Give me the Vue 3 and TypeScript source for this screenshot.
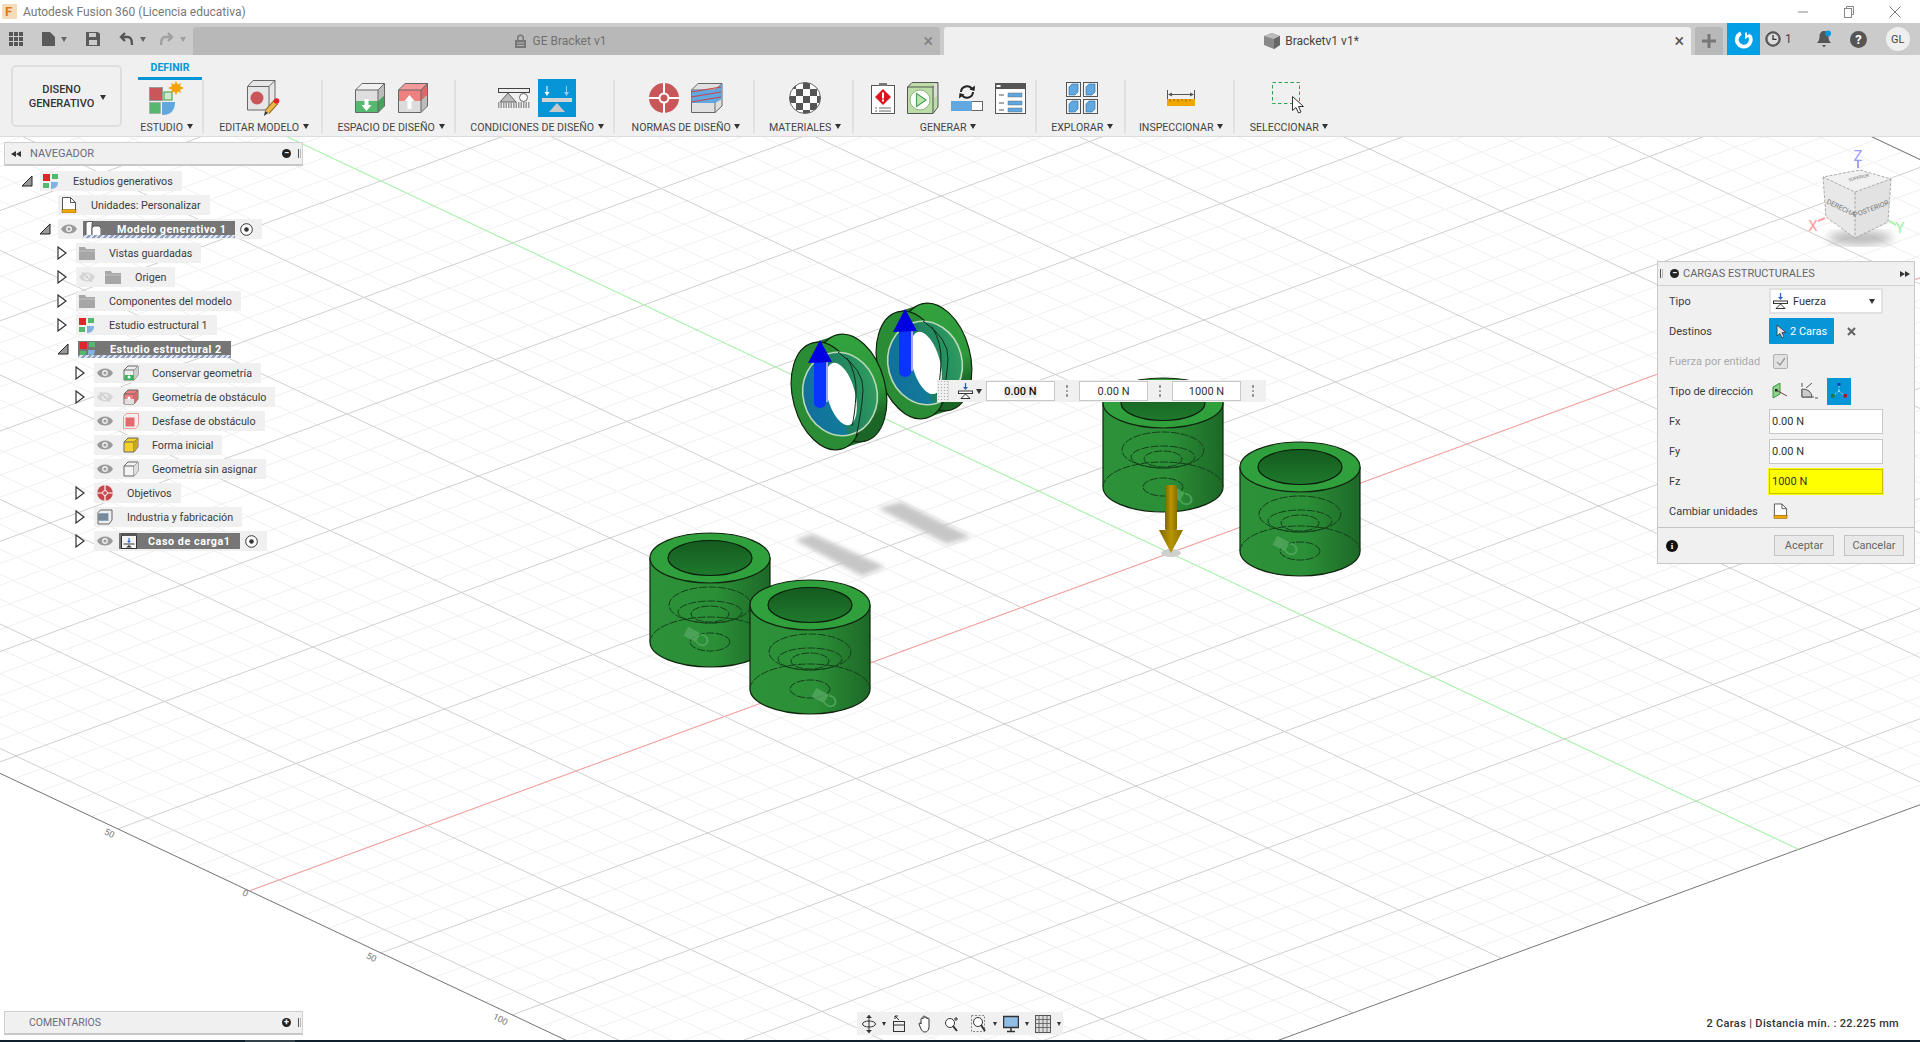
<template>
  <div class="app">
    <div class="titlebar">
      <svg class="titlebar__logo" width="15" height="15" viewBox="0 0 15 15">
        <rect width="15" height="15" fill="#f7dcb9" />
        <text x="3" y="12" font-size="13" font-weight="700" font-family="Roboto, sans-serif" fill="#d97a1e">F</text>
      </svg>
      <span class="titlebar__text">Autodesk Fusion 360 (Licencia educativa)</span>
      <div class="winctl">
        <span class="winctl__btn" v-for="w in winIcons" :key="w" v-html="w" />
      </div>
    </div>

    <div class="tabbar">
      <div class="quick">
        <svg width="14" height="14" viewBox="0 0 14 14" fill="#555">
          <template v-for="y in [0, 5, 10]" :key="y">
            <rect v-for="x in [0, 5, 10]" :key="x" :x="x" :y="y" width="4" height="4" />
          </template>
        </svg>
        <span class="quick__btn">
          <svg width="13" height="14" viewBox="0 0 13 14" fill="#5a5a5a"><path d="M0 0h8l5 5v9H0z" /></svg>
          <i class="caret" />
        </span>
        <svg width="14" height="14" viewBox="0 0 14 14" fill="#5a5a5a"><path d="M0 0h12l2 2v12H0zM3 1v4h7V1zM3 8v5h8V8z" fill-rule="evenodd" /></svg>
        <span class="quick__btn">
          <svg width="15" height="14" viewBox="0 0 15 14" fill="none" stroke="#555" stroke-width="2.4"><path d="M6 1 2 5l4 4M2 5h7c3 0 4 3 4 8" /></svg>
          <i class="caret" />
        </span>
        <span class="quick__btn quick__btn--redo">
          <svg width="15" height="14" viewBox="0 0 15 14" fill="none" stroke="#a0a0a0" stroke-width="2.4"><path d="m9 1 4 4-4 4M13 5H6C3 5 2 8 2 13" /></svg>
          <i class="caret caret--dim" />
        </span>
      </div>
      <div class="doc-tab">
        <span />
        <span class="doc-tab__name doc-tab__name--dim">
          <svg width="11" height="14" viewBox="0 0 11 14" fill="#777"><path d="M2 6V4a3.5 3.5 0 0 1 7 0v2h2v8H0V6zm1.500 0h4V4a2 2 0 0 0-4 0zM2 8.500h7v1H2zm0 2.500h7v1H2z" fill-rule="evenodd" /></svg>
          GE Bracket v1
        </span>
        <span class="doc-tab__close doc-tab__close--dim">×</span>
      </div>
      <div class="doc-tab doc-tab--active">
        <span />
        <span class="doc-tab__name">
          <svg width="16" height="16" viewBox="0 0 16 16"><path d="m8 0 8 3v9l-6 4-10-4V3z" fill="#888" /><path d="m0 3 10 3 6-3-8-3z" fill="#bbb" /><path d="m10 6 6-3v9l-6 4z" fill="#666" /></svg>
          Bracketv1 v1*
        </span>
        <span class="doc-tab__close">×</span>
      </div>
      <div class="tabbar__plus">
        <svg width="14" height="14" viewBox="0 0 14 14" fill="#777"><path d="M5.500 0h3v5.500H14v3H8.500V14h-3V8.500H0v-3h5.500z" /></svg>
      </div>
      <div class="tabbar__sync">
        <svg width="19" height="19" viewBox="0 0 19 19" fill="none" stroke="#fff" stroke-width="3.800">
          <path d="M7 3.200a7 7 0 1 0 8.500 2.300" />
          <path d="M12 2.500v5l4-3" stroke-width="1.800" />
        </svg>
      </div>
      <div class="tabbar__tools">
        <span class="tabbar__job">
          <svg width="16" height="16" viewBox="0 0 16 16">
            <circle cx="8" cy="8" r="7.200" fill="#666" stroke="#444" />
            <circle cx="8" cy="8" r="5.400" fill="#ddd" />
            <path d="M8 4v4.400h3.500" fill="none" stroke="#333" stroke-width="1.300" />
          </svg>
          1
        </span>
        <svg class="tabbar__bell" width="15" height="18" viewBox="0 0 15 18">
          <path d="M7 1c3 0 4.500 2.500 4.500 6 0 3 1 4.500 2.500 6H0c1.500-1.500 2.500-3 2.500-6C2.500 3.500 4 1 7 1z" fill="#555" />
          <path d="M5 15h4l-2 2.500z" fill="#555" />
          <circle cx="11" cy="3.500" r="3" fill="#0696d7" />
        </svg>
        <svg class="tabbar__help" width="17" height="17" viewBox="0 0 17 17">
          <circle cx="8.500" cy="8.500" r="8.500" fill="#555" />
          <text x="8.500" y="13" font-size="13" font-weight="700" text-anchor="middle" font-family="Roboto, sans-serif" fill="#fff">?</text>
        </svg>
        <span class="tabbar__avatar">GL</span>
      </div>
    </div>

    <div class="ribbon">
      <button class="mode-btn">
        <span>DISENO<br />GENERATIVO</span>
        <i class="caret caret--dark" />
      </button>
      <div class="ribbon__main">
        <div class="ribbon__tabs"><span class="ribbon__tab">DEFINIR</span></div>
        <div class="ribbon__tools">
          <div
            v-for="group in toolGroups"
            :key="group.label"
            class="tool"
            :style="{ width: group.width + 'px', paddingLeft: group.pad + 'px', borderRightWidth: group.last ? 0 : undefined }"
          >
            <div class="tool__icons" :style="{ gap: group.gap + 'px' }">
              <svg
                v-for="icon in group.icons"
                :key="icon.name"
                :width="icon.w"
                :height="icon.h"
                :viewBox="`0 0 ${icon.w} ${icon.h}`"
                v-html="toolIcons[icon.name]"
              />
            </div>
            <div class="tool__label">{{ group.label }} <i class="caret caret--dark" /></div>
          </div>
        </div>
      </div>
    </div>

    <div class="viewport">
      <svg class="scene" width="1920" height="903" viewBox="0 137 1920 903">
        <defs>
          <linearGradient id="cylBody" x1="0" x2="1" y1="0" y2="0">
            <stop offset="0" stop-color="#2c9138" />
            <stop offset="0.55" stop-color="#2b8f37" />
            <stop offset="1" stop-color="#1d6827" />
          </linearGradient>
          <linearGradient id="cylHole" x1="0" x2="0" y1="0" y2="1">
            <stop offset="0" stop-color="#145a1f" />
            <stop offset="1" stop-color="#1f7a2c" />
          </linearGradient>
          <linearGradient id="ringBack" x1="0" x2="0" y1="0" y2="1">
            <stop offset="0" stop-color="#32a33e" />
            <stop offset="0.55" stop-color="#2e983a" />
            <stop offset="0.8" stop-color="#1b6626" />
            <stop offset="1" stop-color="#1b6626" />
          </linearGradient>
          <linearGradient id="ringInner" x1="0" x2="1" y1="0" y2="0">
            <stop offset="0" stop-color="#12709c" />
            <stop offset="0.42" stop-color="#127a9a" />
            <stop offset="0.5" stop-color="#1e7f60" />
            <stop offset="1" stop-color="#2f9c5e" />
          </linearGradient>
          <linearGradient id="gold" x1="0" x2="1" y1="0" y2="0">
            <stop offset="0" stop-color="#7e6400" />
            <stop offset="0.5" stop-color="#b89600" />
            <stop offset="1" stop-color="#8a6e00" />
          </linearGradient>
          <filter id="blur2"><feGaussianBlur stdDeviation="2.400" /></filter>
          <filter id="blur5"><feGaussianBlur stdDeviation="5" /></filter>
        </defs>

        <line
          v-for="(l, i) in gridLines"
          :key="i"
          :x1="l.x1"
          :y1="l.y1"
          :x2="l.x2"
          :y2="l.y2"
          :stroke="l.color"
          stroke-width="1"
        />
        <text
          v-for="t in gridLabels"
          :key="t.x"
          class="scene__tick"
          :transform="`translate(${t.x} ${t.y}) rotate(27)`"
          text-anchor="middle"
        >{{ t.text }}</text>

        <polygon points="878,508 901,502 971,537 947,544" fill="#c6c6c6" filter="url(#blur2)" />
        <polygon points="795,540 812,534 885,567 862,576" fill="#c6c6c6" filter="url(#blur2)" />

        <g v-for="c in cylinders" :key="c.x" :transform="`translate(${c.x} ${c.y})`">
          <path d="M-60 0V84A60 25 0 0 0 60 84V0z" fill="url(#cylBody)" stroke="#10240f" stroke-width="1.200" />
          <g fill="none" stroke="#14401a" stroke-width="1" stroke-dasharray="8 1.500">
            <ellipse cy="47" rx="41" ry="18" />
            <ellipse cy="54" rx="32" ry="11" />
            <ellipse cy="56" rx="19" ry="8" />
            <path d="M-60 84A60 25 0 0 1 60 84" />
            <ellipse cy="84" rx="20" ry="9" />
          </g>
          <g :transform="`translate(${c.mark} ${c.mark < 0 ? 77 : 91}) rotate(28)`" fill="#55a860" opacity="0.8">
            <rect x="-8" y="-5" width="14" height="10" />
            <path d="M7-4a6 5 0 1 1-1 8" fill="none" stroke="#55a860" stroke-width="2" />
          </g>
          <ellipse rx="60" ry="25" fill="#30a03c" stroke="#10240f" stroke-width="1.200" />
          <ellipse rx="42" ry="17.500" fill="url(#cylHole)" stroke="#0c1c0c" stroke-width="1.200" />
        </g>

        <g v-for="r in rings" :key="r" :transform="`translate(${r} ${r * -0.365})`">
          <polygon points="813,343 837,335 865,441 841,449" fill="#1d6c27" />
          <ellipse cx="851" cy="388" rx="34" ry="55" transform="rotate(-15 851 388)" fill="url(#ringBack)" stroke="#10240f" stroke-width="1.200" />
          <ellipse cx="827" cy="396" rx="34" ry="55" transform="rotate(-15 827 396)" fill="#2a8c34" stroke="#10240f" stroke-width="1.200" />
          <ellipse cx="840" cy="394" rx="37" ry="42" transform="rotate(-15 840 394)" fill="url(#ringInner)" stroke="#b9d8ba" stroke-width="1.600" />
          <ellipse cx="841" cy="394" rx="14" ry="32" transform="rotate(-15 841 394)" fill="#fff" />
          <path d="M838 352q26 18 25 38t-7 47" fill="none" stroke="#0e2a1a" stroke-width="1" />
          <path d="M847 358q10 16 9 36t-4 32" fill="none" stroke="#0e2a1a" stroke-width="1" />
          <rect x="825" y="362" width="3" height="40" fill="#a6a6ff" />
          <path d="M814 362h12v41a6 5 0 0 1-12 0z" fill="#0a34ff" />
          <polygon points="820,340 808,363 832,362" fill="#0000e0" />
        </g>

        <ellipse cx="1171" cy="553" rx="10" ry="4" fill="#cfcfcf" />
        <rect x="1165" y="485" width="12" height="46" rx="3" fill="url(#gold)" />
        <polygon points="1159,530 1183,530 1171,553" fill="url(#gold)" />

        <ellipse cx="1860" cy="238" rx="32" ry="7" fill="#8a8a8a" opacity="0.6" filter="url(#blur5)" />
        <polygon points="1860,170 1891,179 1855,192 1823,177" fill="#f1f1f1" />
        <polygon points="1823,177 1855,192 1855,238 1826,217" fill="#e8e8e8" />
        <polygon points="1855,192 1891,179 1888,222 1855,238" fill="#e2e2e2" />
        <g fill="none" stroke="#999" stroke-width="0.800" stroke-dasharray="3 1.500">
          <path d="M1860 170l31 9-36 13-32-15z" />
          <path d="M1823 177l3 40 29 21 33-16 3-43M1855 192v46" />
        </g>
        <text class="scene__cube" transform="translate(1840 210) rotate(26)" text-anchor="middle">DERECHA</text>
        <text class="scene__cube" transform="translate(1872 211) rotate(-21)" text-anchor="middle">POSTERIOR</text>
        <text class="scene__cube scene__cube--top" transform="translate(1859 179) rotate(-14)" text-anchor="middle">SUPERIOR</text>
        <path d="M1858 168v-7" stroke="#a3a3ff" stroke-width="2" />
        <path d="M1825 218l-7 3" stroke="#ff9e9e" stroke-width="2" />
        <path d="M1889 221l7 4" stroke="#a6f5a6" stroke-width="2" />
        <text class="scene__axis" x="1858" y="161" fill="#9a9aff" text-anchor="middle">Z</text>
        <text class="scene__axis" x="1813" y="231" fill="#ff9c9c" text-anchor="middle">X</text>
        <text class="scene__axis" x="1900" y="233" fill="#a6f0a6" text-anchor="middle">Y</text>
      </svg>

      <div class="side-panel side-panel--nav">
        <span class="rewind"><i /><i /></span>
        <span class="side-panel__title">NAVEGADOR</span>
        <span class="round-btn">−</span>
        <span class="grip" />
      </div>

      <div class="tree">
        <div
          v-for="row in tree"
          :key="row.label"
          class="tree__row"
          :style="{ paddingLeft: 21 + row.depth * 18 + 'px' }"
        >
          <span class="tree__arrow">
            <svg v-if="row.arrow === 'open'" width="12" height="12" viewBox="0 0 12 12">
              <polygon points="1,11 11,1 11,11" fill="#999" stroke="#222" />
            </svg>
            <svg v-else-if="row.arrow === 'closed'" width="10" height="14" viewBox="0 0 10 14">
              <polygon points="1,1 9,7 1,13" fill="#fff" stroke="#333" stroke-width="1.200" />
            </svg>
          </span>
          <div class="node" :class="{ 'node--bare': row.active && !row.eye }">
            <svg v-if="row.eye" class="node__eye" width="16" height="10" viewBox="0 0 16 10" :opacity="row.eye === 'off' ? 0.3 : 1">
              <path d="M0 5c3-6 13-6 16 0-3 6-13 6-16 0z" fill="#9a9a9a" />
              <circle cx="8" cy="5" r="3" fill="#f0f0f0" />
              <circle cx="8" cy="5" r="1.600" fill="#9a9a9a" />
              <path v-if="row.eye === 'off'" d="M3 0l10 10" stroke="#888" stroke-width="1.500" />
            </svg>
            <div class="node__body" :class="{ 'node__body--active': row.active, 'node__body--hatched': row.hatched }">
              <svg class="node__icon" width="16" height="16" viewBox="0 0 16 16" v-html="treeIcons[row.icon]" />
              <span class="node__label" :style="{ marginLeft: (row.gap ?? 14) + 'px' }">{{ row.label }}</span>
            </div>
            <svg v-if="row.radio" class="node__radio" width="13" height="13" viewBox="0 0 13 13">
              <circle cx="6.500" cy="6.500" r="5.800" fill="#fff" stroke="#333" />
              <circle cx="6.500" cy="6.500" r="2.300" fill="#333" />
            </svg>
          </div>
        </div>
      </div>

      <div class="side-panel side-panel--comments">
        <span class="side-panel__title">COMENTARIOS</span>
        <span class="round-btn">+</span>
        <span class="grip" />
      </div>

      <div class="float-bar">
        <span class="float-bar__grip" />
        <svg width="15" height="16" viewBox="0 0 15 16" v-html="forceIcon" />
        <i class="caret caret--dark" />
        <template v-for="(v, i) in ['0.00 N', '0.00 N', '1000 N']" :key="i">
          <span class="float-bar__input">
            <span :class="{ 'float-bar__sel': i === 0 }">{{ v }}</span>
          </span>
          <span class="float-bar__dots"><i /><i /><i /></span>
        </template>
      </div>

      <div class="panel">
        <div class="panel__head">
          <span class="grip" />
          <span class="round-btn">−</span>
          <span class="panel__title">CARGAS ESTRUCTURALES</span>
          <span class="rewind rewind--fwd"><i /><i /></span>
        </div>
        <div class="panel__row">
          <label>Tipo</label>
          <div class="select">
            <svg width="15" height="16" viewBox="0 0 15 16" v-html="forceIcon" />
            <span>Fuerza</span>
            <i class="caret caret--dark" />
          </div>
        </div>
        <div class="panel__row">
          <label>Destinos</label>
          <div class="target">
            <svg width="11" height="15" viewBox="0 0 11 15"><path d="M1 1v11l3-2.500 2 4.500 2-1-2-4.500h4z" fill="#e4e4e4" stroke="#333" stroke-width=".8" /></svg>
            2 Caras
          </div>
          <svg class="panel__clear" width="9" height="9" viewBox="0 0 9 9"><path d="m1 1 7 7M8 1 1 8" stroke="#666" stroke-width="2.200" /></svg>
        </div>
        <div class="panel__row">
          <label class="is-disabled">Fuerza por entidad</label>
          <span class="check">
            <svg width="10" height="9" viewBox="0 0 10 9"><path d="m1 5 3 3 5-7" fill="none" stroke="#999" stroke-width="1.300" /></svg>
          </span>
        </div>
        <div class="panel__row">
          <label>Tipo de dirección</label>
          <div class="dirs">
            <svg width="16" height="16" viewBox="0 0 16 16"><path d="M1 4 8 0v11l-7 4z" fill="#8fd08f" stroke="#3c9a3c" /><path d="m4 7 11 6" stroke="#744" /><rect x="3" y="6" width="2.500" height="2.500" fill="#222" /></svg>
            <svg width="17" height="16" viewBox="0 0 17 16" fill="none" stroke="#555"><path d="M1 0v4M1 6v8h12M5 5l6-5" /><path d="M1 6q9 0 10 8H1z" fill="#ccc" /><path d="M14 15h3" /></svg>
            <span class="dirs__on">
              <svg width="18" height="16" viewBox="0 0 18 16"><path d="M9 8V1M9 8 3 13M9 8l6 5" stroke="#b8e0f0" stroke-dasharray="2 1.500" fill="none" /><rect x="1" y="11" width="3.500" height="3.500" fill="#1c7a28" /><rect x="13.500" y="11" width="3.500" height="3.500" fill="#a32020" /><rect x="7.500" y="0" width="3" height="3" fill="#1b3fbb" /></svg>
            </span>
          </div>
        </div>
        <div v-for="f in forces" :key="f.label" class="panel__row">
          <label>{{ f.label }}</label>
          <div class="input" :class="{ 'input--hi': f.hi }">{{ f.value }}</div>
        </div>
        <div class="panel__row">
          <label>Cambiar unidades</label>
          <svg class="panel__units" width="15" height="16" viewBox="0 0 16 16" v-html="treeIcons.units" />
        </div>
        <div class="panel__foot">
          <span class="info">i</span>
          <button class="btn">Aceptar</button>
          <button class="btn">Cancelar</button>
        </div>
      </div>

      <div class="nav-bar">
        <template v-for="b in navBar" :key="b.name">
          <svg :class="{ 'nav-bar__solo': !b.caret }" :width="b.w" height="18" :viewBox="`0 0 ${b.w} 18`" v-html="b.svg" />
          <i v-if="b.caret" class="caret caret--tiny" />
        </template>
      </div>

      <div class="status">2 Caras | Distancia mín. : 22.225 mm</div>
    </div>

    <div class="taskbar"><span class="taskbar__app" /></div>
  </div>
</template>

<script setup lang="ts">
import { computed } from 'vue'

interface TreeRow {
  depth: number
  arrow?: 'open' | 'closed'
  eye?: 'on' | 'off'
  icon: string
  label: string
  active?: boolean
  hatched?: boolean
  radio?: boolean
  gap?: number
}

// screen position of the world origin, and one major grid cell along each axis
const origin = [1170, 553]
const stepU = [148.5, -54.5]
const stepV = [131.5, 62]
const uMin = -6.2
const uMax = 6
const vMin = -9
const vMax = 4.78

function project(u: number, v: number) {
  return {
    x: origin[0] + u * stepU[0] + v * stepV[0],
    y: origin[1] + u * stepU[1] + v * stepV[1],
  }
}

function segment(a: { x: number; y: number }, b: { x: number; y: number }, color: string) {
  return { x1: a.x, y1: a.y, x2: b.x, y2: b.y, color }
}

const gridLines = computed(() => {
  const minor: ReturnType<typeof segment>[] = []
  const major: ReturnType<typeof segment>[] = []
  for (let i = -31; i <= 30; i++) {
    const line = segment(project(i / 5, vMin), project(i / 5, vMax), i % 5 === 0 ? '#cfcfcf' : '#f0f0f0')
    ;(i % 5 === 0 ? major : minor).push(line)
  }
  for (let i = -45; i <= 23; i++) {
    const line = segment(project(uMin, i / 5), project(uMax, i / 5), i % 5 === 0 ? '#cfcfcf' : '#f0f0f0')
    ;(i % 5 === 0 ? major : minor).push(line)
  }
  return [
    ...minor,
    ...major,
    segment(project(uMin, vMin), project(uMin, vMax), '#777777'),
    segment(project(uMin, vMax), project(uMax, vMax), '#777777'),
    segment(project(uMax, vMin), project(uMax, vMax), '#777777'),
    segment(project(uMin, 0), project(uMax, 0), '#ff9f9f'),
    segment(project(0, vMin), project(0, vMax), '#a6ffa6'),
  ]
})

const gridLabels = [
  { x: 108, y: 836, text: '50' },
  { x: 244, y: 896, text: '0' },
  { x: 370, y: 960, text: '50' },
  { x: 499, y: 1022, text: '100' },
]

const cylinders = [
  { x: 710, y: 558, mark: -17 },
  { x: 810, y: 605, mark: 11 },
  { x: 1163, y: 403, mark: 14 },
  { x: 1300, y: 467, mark: -18 },
]
const rings = [85, 0]

const forces = [
  { label: 'Fx', value: '0.00 N' },
  { label: 'Fy', value: '0.00 N' },
  { label: 'Fz', value: '1000 N', hi: true },
]

const winIcons = [
  '<svg width="10" height="10" viewBox="0 0 10 10"><path d="M0 5h10" stroke="#888"/></svg>',
  '<svg width="10" height="12" viewBox="0 0 10 12" fill="none" stroke="#888"><path d="M2.500 2.500V.500h7v8h-2"/><rect x=".5" y="2.500" width="7" height="9"/></svg>',
  '<svg width="12" height="12" viewBox="0 0 12 12"><path d="m.5.500 11 11M11.500.500l-11 11" stroke="#777"/></svg>',
]

const cube = (top: string, upper: string, lower: string, side1: string, side2: string, arrow: string) => `
  <polygon points="0.500,7 7,.5 29.500,.5 23,7" fill="${top}"/>
  <polygon points="23,7 29.500,.5 29.500,12 23,18" fill="${side1}"/>
  <polygon points="23,18 29.500,12 29.500,23 23,29.500" fill="${side2}"/>
  <rect x=".5" y="7" width="22.500" height="11" fill="${upper}"/>
  <rect x=".5" y="18" width="22.500" height="11.500" fill="${lower}"/>
  <path d="M.5 7 7 .5h22.500V23L23 29.500H.5zM.5 7H23v22.500M23 7 29.500.5" fill="none" stroke="#666"/>
  ${arrow}`

const exploreCell = (x: number, y: number) => `
  <rect x="${x + 0.5}" y="${y + 0.5}" width="14" height="14" fill="#f4f4f4" stroke="#555"/>
  <polygon points="${x + 3},${y + 5} ${x + 6},${y + 2} ${x + 12},${y + 2} ${x + 12},${y + 10} ${x + 9},${y + 13} ${x + 3},${y + 13}" fill="#62a8e0" stroke="#2e6da0" stroke-width=".6"/>`

const toolIcons: Record<string, string> = {
  study: `
    <rect x=".5" y="6.500" width="13" height="13" fill="#c9575a" stroke="#999"/>
    <rect x=".5" y="21.500" width="11" height="11" fill="#55b86e" stroke="#999" stroke-width=".5"/>
    <path d="M13 21h13q0 13-13 13z" fill="#62a8e0"/>
    <rect x="15" y="11" width="8" height="8" fill="#cfe8cf" stroke="#3c9a3c"/>
    <polygon points="27,0 28.800,3.500 32,2 31,5.200 35,7 31,8.800 32,12 28.800,10.500 27,14 25.200,10.500 22,12 23,8.800 19,7 23,5.200 22,2 25.200,3.500" fill="#f5a300"/>`,
  edit: `
    <path d="M.5 6.500 6 .5h22V22l-6 8H.5z" fill="#e6e6e6" stroke="#666"/>
    <path d="M.5 6.500H22V30M22 6.500 28 .5" fill="none" stroke="#666"/>
    <circle cx="10" cy="18" r="6.500" fill="#c9575a"/>
    <path d="m29 22-9 10" stroke="#8a6a20" stroke-width="6"/>
    <path d="m29 22-9 10" stroke="#eeb54a" stroke-width="4"/>
    <path d="m17 36 1-5 3 2z" fill="#333"/>
    <circle cx="29.500" cy="21" r="2.800" fill="#e8202a"/>`,
  keep: cube('#f1f1f1', '#dedede', '#57b870', '#bcbcbc', '#46a35e', '<path d="M9.500 16h4v6h3l-5 6-5-6h3z" fill="#fff"/>'),
  obstacle: cube('#f59a9a', '#ef8080', '#dcdcdc', '#d96a6a', '#bcbcbc', '<path d="M9.500 26h4v-8h3l-5-6-5 6h3z" fill="#fff"/>'),
  support: `
    <rect x=".5" y=".5" width="31" height="4" fill="#eee" stroke="#444"/>
    <polygon points="10,5 2,14 18,14" fill="#bbb" stroke="#666"/>
    <circle cx="25.500" cy="9.500" r="4" fill="#fff" stroke="#666"/>
    <path d="M0 17h32" stroke="#999" stroke-width="6" stroke-dasharray="1.500 1"/>`,
  load: `
    <rect width="38" height="38" fill="#0696d7"/>
    <path d="M9 7v8" stroke="#fff"/><path d="m6.500 13 2.500 4 2.500-4z" fill="#fff"/>
    <path d="M28.500 7v8" stroke="#8fd0f0"/><path d="m26 13 2.500 4 2.500-4z" fill="#8fd0f0"/>
    <rect x="4" y="19" width="30" height="4" fill="#d4d4d4"/>
    <polygon points="19,24 11,33 27,33" fill="#c8c8c8"/>`,
  target: `
    <circle cx="15" cy="15" r="15" fill="#c9575a"/>
    <path d="M0 15h30M15 0v30" stroke="#fff" stroke-width="2"/>
    <circle cx="15" cy="15" r="4.500" fill="#c9575a" stroke="#fff" stroke-width="2"/>`,
  layers: `
    <path d="M.5 7 7 .5h24V23l-7 6.500H.5z" fill="#e0e0e0" stroke="#666"/>
    <path d="M.5 7H24v22.500M24 7l7-6.500" fill="none" stroke="#666"/>
    <polygon points=".5,7 24,7 31,1 31,16 24,20 .5,20" fill="#62a8e0"/>
    <path d="M0 9 30 4M0 14l30-5M0 19l30-5" stroke="#c9404a" stroke-width="1.200"/>`,
  checker: `
    <defs><pattern id="chk" width="14" height="14" patternUnits="userSpaceOnUse">
      <rect width="14" height="14" fill="#fff"/><rect width="7" height="7" fill="#555"/><rect x="7" y="7" width="7" height="7" fill="#555"/>
    </pattern></defs>
    <ellipse cx="16" cy="16" rx="15.500" ry="15.500" fill="url(#chk)" stroke="#666"/>`,
  report: `
    <rect x=".5" y="3.500" width="23" height="28" fill="#fff" stroke="#555"/>
    <path d="M8 4h8V1h-8z" fill="#777"/>
    <polygon points="12,7 20,15 12,23 4,15" fill="#e0141c"/>
    <rect x="11" y="10.500" width="2" height="6" fill="#fff"/><rect x="11" y="17.500" width="2" height="2" fill="#fff"/>
    <path d="M4 26h2M8 26h12M4 29h2M8 29h12" stroke="#666"/>`,
  generate: `
    <path d="M.5 5 5 .5h26V25l-5 6.500H.5z" fill="#bcdca8" stroke="#555"/>
    <path d="M.5 5H26v26.500M26 5l5-4.500" fill="none" stroke="#555"/>
    <polygon points="27,2 30,1 30,14 27,16" fill="#ddd"/>
    <circle cx="13" cy="18" r="10" fill="#fff" stroke="#8ab87a"/>
    <polygon points="9.500,11.500 19,18 9.500,24.500" fill="#bfe6a8" stroke="#4aa060" stroke-width="1.200"/>`,
  refresh: `
    <path d="M10 7a6 6 0 0 1 11-3M22 7a6 6 0 0 1-11 3" fill="none" stroke="#222" stroke-width="2"/>
    <path d="m24 .5-.5 5.500-5-1.500zM8 13.500 8.500 8l5 1.500z" fill="#222"/>
    <rect x=".5" y="16.500" width="31" height="9" fill="#fff" stroke="#666"/>
    <rect y="16" width="21" height="10" fill="#62a8e0"/>`,
  listing: `
    <rect x=".5" y=".5" width="30" height="30" fill="#fff" stroke="#555"/>
    <rect width="31" height="6" fill="#555"/><rect x="1.500" y="2" width="4" height="2" fill="#fff"/>
    <path d="M4 12h5M4 20h5M4 27h5" stroke="#555"/>
    <rect x="13" y="10" width="14" height="4" fill="#62a8e0" stroke="#555" stroke-width=".4"/>
    <rect x="13" y="18" width="14" height="4" fill="#62a8e0" stroke="#555" stroke-width=".4"/>
    <rect x="13" y="25" width="14" height="4" fill="#62a8e0" stroke="#555" stroke-width=".4"/>`,
  explore: exploreCell(0, 0) + exploreCell(17, 0) + exploreCell(0, 17) + exploreCell(17, 17),
  measure: `
    <path d="M.5 0v9M27.500 0v9M2 4.500h24" stroke="#555"/>
    <path d="m1 4.500 4-2v4zM27 4.500l-4-2v4z" fill="#555"/>
    <rect y="9" width="28" height="7" fill="#f0a800"/>
    <path d="M3 9v3M7 9v2M11 9v3M15 9v2M19 9v3M23 9v2" stroke="#9a6b00"/>`,
  select: `
    <rect x=".5" y=".5" width="27" height="21" fill="none" stroke="#2aa050" stroke-dasharray="3.500 2.500"/>
    <path d="M20.500 14.500v14l3.500-3 2.500 5.500 2.500-1-2.500-5.500h5z" fill="#fff" stroke="#333"/>`,
}

const toolGroups = [
  { label: 'ESTUDIO', width: 74, pad: 1, gap: 0, icons: [{ name: 'study', w: 35, h: 34 }] },
  { label: 'EDITAR MODELO', width: 119, pad: 3, gap: 0, icons: [{ name: 'edit', w: 34, h: 36 }] },
  { label: 'ESPACIO DE DISEÑO', width: 133, pad: 5, gap: 13, icons: [{ name: 'keep', w: 30, h: 30 }, { name: 'obstacle', w: 30, h: 30 }] },
  { label: 'CONDICIONES DE DISEÑO', width: 159, pad: 5, gap: 8, icons: [{ name: 'support', w: 32, h: 20 }, { name: 'load', w: 38, h: 38 }] },
  { label: 'NORMAS DE DISEÑO', width: 140, pad: 4, gap: 12, icons: [{ name: 'target', w: 30, h: 30 }, { name: 'layers', w: 32, h: 30 }] },
  { label: 'MATERIALES', width: 99, pad: 3, gap: 0, icons: [{ name: 'checker', w: 32, h: 32 }] },
  {
    label: 'GENERAR',
    width: 183,
    pad: 7,
    gap: 12,
    icons: [
      { name: 'report', w: 24, h: 32 },
      { name: 'generate', w: 32, h: 32 },
      { name: 'refresh', w: 32, h: 26 },
      { name: 'listing', w: 31, h: 31 },
    ],
  },
  { label: 'EXPLORAR', width: 89, pad: 3, gap: 0, icons: [{ name: 'explore', w: 32, h: 32 }] },
  { label: 'INSPECCIONAR', width: 109, pad: 3, gap: 0, icons: [{ name: 'measure', w: 28, h: 16 }] },
  { label: 'SELECCIONAR', width: 105, pad: 3, gap: 0, last: true, icons: [{ name: 'select', w: 34, h: 32 }] },
]

const forceIcon = `
  <path d="M7.500 0v5" stroke="#2a62cc" stroke-width="1.300"/><path d="m5 4 2.500 3L10 4z" fill="#2a62cc"/>
  <rect x=".5" y="8" width="14" height="2.500" fill="#fff" stroke="#333"/>
  <polygon points="7.500,11 3,15.500 12,15.500" fill="#fff" stroke="#333"/>`

const studyMini = `
  <rect y="1" width="7" height="7" fill="#e0242a"/>
  <rect x="9" y="1" width="6" height="5" fill="#55b86e"/>
  <rect y="10" width="6" height="5" fill="#55b86e"/>
  <path d="M8 9h7q0 7-7 7z" fill="#7fb2e0"/>`

const folderMini = '<path d="M0 2h6l1 2h9v11H0z" fill="#a6a6a6"/><path d="M0 6h16" stroke="#c4c4c4"/>'

const treeCube = (face: string, side: string, extra = '') => `
  <path d="M1 5l4-4h10v9l-4 5H1z" fill="${face}" stroke="#666"/>
  <path d="M1 5h10v10M11 5l4-4" fill="none" stroke="#666"/>
  <path d="M11 5l4-4v9l-4 5z" fill="${side}"/>${extra}`

const treeIcons: Record<string, string> = {
  study: studyMini,
  units: `
    <path d="M1.500 .5h8l5 5v8h-13z" fill="#fff" stroke="#555"/>
    <path d="M9.500.5v5h5" fill="none" stroke="#555"/>
    <rect x="1" y="12.500" width="14" height="3.500" fill="#f0a800" stroke="#7a5600" stroke-width=".5"/>`,
  model: `
    <path d="M1 1.500 3 .5h5l-1 2v12.500H1z" fill="#fff" stroke="#555"/>
    <path d="m7 7 2-2h5l2 2v8H7z" fill="#fff" stroke="#555"/>`,
  folder: folderMini,
  keep: treeCube('#eee', '#ccc', '<rect x="1.500" y="10" width="9.500" height="5" fill="#3cb25a"/><circle cx="6" cy="12" r="1.500" fill="#fff"/>'),
  obstacle: treeCube('#ee7f7f', '#d96a6a', '<rect x="1.500" y="10" width="9.500" height="5" fill="#e0e0e0"/><circle cx="6" cy="9" r="1.500" fill="#fff"/>'),
  offset: `
    <path d="M.5 3.500 3.500.5h12V12l-3 3.500H.5z" fill="none" stroke="#f09a9a"/>
    <rect x="2.500" y="4.500" width="9" height="9" fill="#e4686c"/>`,
  start: treeCube('#f7d02c', '#c9a520'),
  blank: treeCube('#f4f4f4', '#ddd'),
  target: `
    <circle cx="8" cy="8" r="7.800" fill="#c9474a"/>
    <path d="M0 8h16M8 0v16" stroke="#fff" stroke-width="1.200"/>
    <circle cx="8" cy="8" r="2.400" fill="#c9474a" stroke="#fff"/>`,
  layers: `
    <path d="M1 3.500 3.500 1H15v10l-3 4H1z" fill="#eee" stroke="#666"/>
    <rect x="1.500" y="4" width="10" height="8" fill="#8aa6c0"/>
    <path d="M1 6h10M1 8h10M1 10h10" stroke="#555" stroke-width=".7"/>`,
  loadcase: `
    <rect x=".5" y=".5" width="15" height="15" fill="#f4f4f4" stroke="#333"/>
    <rect width="16" height="3" fill="#555"/>
    <path d="M8 5v4" stroke="#2a62cc" stroke-width="1.200"/><path d="m6 8 2 2 2-2z" fill="#2a62cc"/>
    <rect x="2.500" y="10.500" width="11" height="1" fill="#333"/>
    <polygon points="8,12 5,14.500 11,14.500" fill="#333"/>`,
}

const tree: TreeRow[] = [
  { depth: 0, arrow: 'open', icon: 'study', label: 'Estudios generativos' },
  { depth: 1, icon: 'units', label: 'Unidades: Personalizar' },
  { depth: 1, arrow: 'open', eye: 'on', icon: 'model', label: 'Modelo generativo 1', active: true, hatched: true, radio: true, gap: 16 },
  { depth: 2, arrow: 'closed', icon: 'folder', label: 'Vistas guardadas' },
  { depth: 2, arrow: 'closed', eye: 'off', icon: 'folder', label: 'Origen' },
  { depth: 2, arrow: 'closed', icon: 'folder', label: 'Componentes del modelo' },
  { depth: 2, arrow: 'closed', icon: 'study', label: 'Estudio estructural 1' },
  { depth: 2, arrow: 'open', icon: 'study', label: 'Estudio estructural 2', active: true, hatched: true },
  { depth: 3, arrow: 'closed', eye: 'on', icon: 'keep', label: 'Conservar geometría', gap: 13 },
  { depth: 3, arrow: 'closed', eye: 'off', icon: 'obstacle', label: 'Geometría de obstáculo', gap: 13 },
  { depth: 3, eye: 'on', icon: 'offset', label: 'Desfase de obstáculo', gap: 13 },
  { depth: 3, eye: 'on', icon: 'start', label: 'Forma inicial', gap: 13 },
  { depth: 3, eye: 'on', icon: 'blank', label: 'Geometría sin asignar', gap: 13 },
  { depth: 3, arrow: 'closed', icon: 'target', label: 'Objetivos' },
  { depth: 3, arrow: 'closed', icon: 'layers', label: 'Industria y fabricación' },
  { depth: 3, arrow: 'closed', eye: 'on', icon: 'loadcase', label: 'Caso de carga1', active: true, radio: true, gap: 11 },
]

const navBar = [
  { name: 'orbit', w: 14, caret: true, svg: '<path d="M7 0v18" stroke="#333"/><path d="m4 3 3-3 3 3zM4 15l3 3 3-3z" fill="#333"/><ellipse cx="7" cy="9" rx="6.500" ry="3" fill="none" stroke="#333"/>' },
  { name: 'look', w: 14, svg: '<rect x="1.500" y="6.500" width="11" height="10" fill="#eee" stroke="#333"/><path d="M1.500 10h11M7 5 3 1M3 1v3M3 1h3" stroke="#333" fill="none"/>' },
  { name: 'pan', w: 14, svg: '<path d="M3 9V4a1 1 0 0 1 2 0V2a1 1 0 0 1 2 0v1a1 1 0 0 1 2 0v1a1 1 0 0 1 2 0v8c0 3-2 5-4 5s-3-1-4-3L1 9a1 1 0 0 1 2 0z" fill="#fff" stroke="#333"/>' },
  { name: 'zoom', w: 15, svg: '<circle cx="6" cy="8" r="4.500" fill="#fff" stroke="#333"/><path d="m9 11 4 5" stroke="#333" stroke-width="2"/><path d="M12 2v4M10 4h4" stroke="#333"/>' },
  { name: 'fit', w: 16, caret: true, svg: '<rect x=".5" y=".5" width="13" height="16" fill="none" stroke="#888" stroke-dasharray="2 1.500"/><circle cx="7" cy="7" r="4.500" fill="#fff" stroke="#333"/><path d="m10 10 4 6" stroke="#333" stroke-width="2"/>' },
  { name: 'display', w: 16, caret: true, svg: '<rect x=".5" y="1.500" width="15" height="11" fill="#8fbfe6" stroke="#333" stroke-width="1.500"/><path d="M8 13v3M4 16.500h8" stroke="#333" stroke-width="1.500"/>' },
  { name: 'grid', w: 16, caret: true, svg: '<rect x=".5" y=".5" width="15" height="17" fill="#ddd" stroke="#555"/><path d="M4 1v16M8 1v16M12 1v16M1 4.500h14M1 8.500h14M1 12.500h14" stroke="#555" stroke-width=".8"/>' },
]
</script>

<style scoped>
.app {
  width: 1920px;
  height: 1042px;
  display: flex;
  flex-direction: column;
  overflow: hidden;
  background: #fff;
  font-family: Roboto, "Liberation Sans", sans-serif;
  font-size: 11px;
  color: #3c3c3c;
}

.caret {
  display: inline-block;
  width: 0;
  height: 0;
  border-left: 3.5px solid transparent;
  border-right: 3.5px solid transparent;
  border-top: 5px solid #666;
}
.caret--dark {
  border-top-color: #333;
}
.caret--dim {
  border-top-color: #a0a0a0;
}
.caret--tiny {
  border-left-width: 2.5px;
  border-right-width: 2.5px;
  border-top: 4px solid #333;
}

.titlebar {
  height: 23px;
  display: flex;
  align-items: center;
  padding-left: 2px;
  flex: none;
}
.titlebar__text {
  margin-left: 6px;
  font-size: 12px;
  color: #787878;
}
.winctl {
  margin-left: auto;
  display: flex;
  padding-right: 2px;
}
.winctl__btn {
  width: 46px;
  height: 23px;
  display: flex;
  align-items: center;
  justify-content: center;
}

.tabbar {
  height: 32px;
  flex: none;
  background: #cbcbcb;
  display: flex;
}
.quick {
  width: 193px;
  flex: none;
  display: flex;
  align-items: center;
  gap: 19px;
  padding: 0 0 0 9px;
  box-sizing: border-box;
}
.quick__btn {
  display: flex;
  align-items: center;
  gap: 6px;
}
.quick__btn--redo {
  margin-left: -6px;
}
.doc-tab {
  flex: 1;
  margin: 4px 4px 0 0;
  background: #b8b8b8;
  border-radius: 3px 3px 0 0;
  display: grid;
  grid-template-columns: 1fr auto 1fr;
  align-items: center;
  font-size: 12px;
}
.doc-tab--active {
  background: #f0f0f0;
}
.doc-tab__name {
  display: flex;
  align-items: center;
  gap: 5px;
  margin-right: 12px;
  color: #444;
}
.doc-tab__name--dim {
  gap: 7px;
  color: #707070;
}
.doc-tab__close {
  justify-self: end;
  padding-right: 7px;
  font-size: 18px;
  line-height: 18px;
  color: #555;
}
.doc-tab__close--dim {
  color: #808080;
}
.tabbar__plus {
  width: 28px;
  margin: 4px 4px 0 0;
  background: #b8b8b8;
  border-radius: 3px 3px 0 0;
  display: flex;
  align-items: center;
  justify-content: center;
  flex: none;
}
.tabbar__sync {
  width: 33px;
  flex: none;
  background: #00a0e6;
  display: flex;
  align-items: center;
  justify-content: center;
}
.tabbar__tools {
  flex: none;
  width: 160px;
  display: flex;
  align-items: center;
  padding-left: 5px;
  box-sizing: border-box;
}
.tabbar__job {
  display: flex;
  align-items: center;
  gap: 4px;
  font-size: 12px;
  color: #444;
}
.tabbar__bell {
  margin-left: 25px;
}
.tabbar__help {
  margin-left: 18px;
}
.tabbar__avatar {
  margin-left: 19px;
  width: 24px;
  height: 24px;
  border-radius: 50%;
  background: #efefef;
  display: flex;
  align-items: center;
  justify-content: center;
  font-size: 11px;
  color: #444;
}

.ribbon {
  height: 82px;
  flex: none;
  box-sizing: border-box;
  background: #f0f0f0;
  border-bottom: 1px solid #dcdcdc;
  display: flex;
}
.mode-btn {
  width: 111px;
  height: 62px;
  margin: 10px 8px 0 11px;
  flex: none;
  box-sizing: border-box;
  border: 2px solid #dedede;
  border-radius: 5px;
  background: #f0f0f0;
  display: flex;
  align-items: center;
  justify-content: center;
  gap: 6px;
  padding: 2px 0 0 2px;
  font: 500 11px/14px Roboto, sans-serif;
  color: #333;
}
.ribbon__main {
  display: flex;
  flex-direction: column;
}
.ribbon__tabs {
  height: 25px;
  flex: none;
  display: flex;
}
.ribbon__tab {
  margin-left: 8px;
  width: 64px;
  box-sizing: border-box;
  padding-top: 6px;
  text-align: center;
  border-bottom: 3px solid #0696d7;
  font-size: 10.5px;
  font-weight: 700;
  color: #0696d7;
}
.ribbon__tools {
  display: flex;
  height: 53px;
}
.tool {
  box-sizing: border-box;
  border-right: 2px solid #e0e0e0;
  display: flex;
  flex-direction: column;
  align-items: center;
}
.tool__icons {
  height: 38px;
  margin-top: -1px;
  display: flex;
  align-items: center;
  justify-content: center;
  flex: none;
}
.tool__label {
  margin-top: 5px;
  line-height: 12px;
  font-size: 10.6px;
  white-space: nowrap;
  color: #444;
}
.tool__label .caret {
  margin-left: 1px;
  vertical-align: 2px;
}

.viewport {
  position: relative;
  flex: 1;
  min-height: 0;
  overflow: hidden;
}
.scene {
  position: absolute;
  left: 0;
  top: 0;
  display: block;
}
.scene__tick {
  font-size: 9px;
  fill: #777;
  font-family: Roboto, sans-serif;
}
.scene__cube {
  font-size: 7px;
  fill: #777;
  font-family: Roboto, sans-serif;
}
.scene__cube--top {
  font-size: 4.5px;
}
.scene__axis {
  font-size: 15px;
  font-family: Roboto, sans-serif;
}

.side-panel {
  position: absolute;
  left: 4px;
  width: 299px;
  height: 24px;
  box-sizing: border-box;
  background: #f0f0f0;
  border: 1px solid #d0d0d0;
  border-bottom: 2px solid #c8c8c8;
  display: flex;
  align-items: center;
  padding-left: 24px;
}
.side-panel--nav {
  top: 5px;
  padding-left: 6px;
}
.side-panel--comments {
  top: 874px;
}
.side-panel__title {
  font-size: 10.5px;
  color: #6b6b7a;
}
.side-panel--nav .side-panel__title {
  font-size: 11px;
}
.rewind {
  display: flex;
  margin-right: 9px;
}
.rewind i {
  width: 0;
  height: 0;
  border-top: 3.5px solid transparent;
  border-bottom: 3.5px solid transparent;
  border-right: 5px solid #333;
}
.rewind--fwd {
  margin: 0 0 0 auto;
}
.rewind--fwd i {
  border-right: 0;
  border-left: 5px solid #333;
}
.round-btn {
  width: 9px;
  height: 9px;
  border-radius: 50%;
  background: #222;
  color: #fff;
  display: flex;
  align-items: center;
  justify-content: center;
  font-size: 9px;
  line-height: 9px;
  font-weight: 700;
}
.side-panel .round-btn {
  margin-left: auto;
}
.grip {
  width: 3px;
  height: 9px;
  box-sizing: border-box;
  border-left: 1px solid #555;
  border-right: 1px solid #bbb;
}
.side-panel .grip {
  margin: 0 1px 0 7px;
}

.tree {
  position: absolute;
  left: 0;
  top: 34px;
  display: flex;
  flex-direction: column;
  gap: 4px;
}
.tree__row {
  display: flex;
  align-items: center;
  height: 20px;
}
.tree__arrow {
  width: 19px;
  flex: none;
  display: flex;
  align-items: center;
}
.node {
  display: flex;
  align-items: center;
  height: 20px;
  padding: 0 9px 0 3px;
  background: #f0f0f0;
  font-size: 10.75px;
}
.node--bare {
  background: none;
  padding: 0;
}
.node__eye {
  flex: none;
  margin-right: 10px;
}
.node__body {
  position: relative;
  display: flex;
  align-items: center;
  height: 100%;
}
.node__body--active {
  height: 16px;
  padding: 0 9px 0 2px;
  margin-left: -4px;
  background: #767676;
  color: #fff;
  font-weight: 700;
  letter-spacing: 0.55px;
}
.node--bare .node__body--active {
  margin-left: 2px;
}
.node__body--hatched::after {
  content: "";
  position: absolute;
  left: 0;
  right: 0;
  bottom: -1px;
  height: 3px;
  background: repeating-linear-gradient(135deg, #8f9fc0 0 2px, #dfe4ee 2px 4px);
}
.node__icon {
  flex: none;
}
.node__label {
  white-space: nowrap;
}
.node__radio {
  margin-left: 5px;
  flex: none;
}

.float-bar {
  position: absolute;
  left: 937px;
  top: 243px;
  width: 329px;
  height: 22px;
  box-sizing: border-box;
  background: #f0f0f0;
  display: flex;
  align-items: center;
}
.float-bar__grip {
  width: 11px;
  height: 100%;
  margin-right: 9px;
  border-right: 1px solid #ddd;
  background: radial-gradient(#aaa 0.5px, transparent 0.6px) 0 0 / 3px 3px;
}
.float-bar .caret {
  margin: 0 4px 0 3px;
}
.float-bar__input {
  width: 69px;
  height: 20px;
  box-sizing: border-box;
  background: #fff;
  border: 1px solid #c8c8c8;
  display: flex;
  align-items: center;
  justify-content: center;
  font-size: 11px;
  color: #333;
}
.float-bar__sel {
  background: #f0f0f0;
  font-weight: 500;
  color: #111;
}
.float-bar__dots {
  width: 24px;
  display: flex;
  flex-direction: column;
  align-items: center;
  gap: 2px;
}
.float-bar__dots i {
  width: 2.5px;
  height: 2.5px;
  border-radius: 50%;
  background: #888;
}

.panel {
  position: absolute;
  left: 1657px;
  top: 124px;
  width: 258px;
  height: 303px;
  box-sizing: border-box;
  background: #f0f0f0;
  border: 1px solid #c8c8c8;
}
.panel__head {
  height: 24px;
  box-sizing: border-box;
  display: flex;
  align-items: center;
  padding: 0 4px 0 2px;
  border-bottom: 1px solid #d0d0d0;
}
.panel__head .round-btn {
  margin-left: 7px;
}
.panel__title {
  margin-left: 4px;
  font-size: 11px;
  color: #666;
}
.panel__row {
  height: 30px;
  display: flex;
  align-items: center;
  padding-left: 11px;
}
.panel__row label {
  width: 100px;
  flex: none;
  font-size: 11px;
  color: #3c3c3c;
}
.panel__row label.is-disabled {
  color: #aaa;
}
.select {
  width: 114px;
  height: 26px;
  box-sizing: border-box;
  background: #fff;
  border: 2px solid #e2e2e2;
  display: flex;
  align-items: center;
  gap: 5px;
  padding: 0 6px 0 2px;
  color: #333;
}
.select .caret {
  margin-left: auto;
}
.target {
  width: 65px;
  height: 26px;
  box-sizing: border-box;
  background: #0696d7;
  color: #fff;
  display: flex;
  align-items: center;
  gap: 3px;
  padding-left: 7px;
  border-radius: 1px;
}
.panel__clear {
  margin-left: 13px;
}
.check {
  width: 13px;
  height: 13px;
  margin-left: 4px;
  border: 1px solid #b0b0b0;
  border-radius: 2px;
  background: #e2e2e2;
  display: flex;
  align-items: center;
  justify-content: center;
}
.dirs {
  display: flex;
  align-items: center;
  gap: 13px;
  margin-left: 3px;
}
.dirs__on {
  width: 24px;
  height: 27px;
  margin-left: -4px;
  background: #0696d7;
  display: flex;
  align-items: center;
  justify-content: center;
}
.input {
  width: 114px;
  height: 25px;
  box-sizing: border-box;
  background: #fff;
  border: 1px solid #c8c8c8;
  display: flex;
  align-items: center;
  padding-left: 2px;
  color: #333;
}
.input--hi {
  background: #ffff00;
  border-color: #c4c400;
  box-shadow: 0 0 0 1px #ffff00;
}
.panel__units {
  margin-left: 4px;
}
.panel__foot {
  margin-top: 1px;
  border-top: 1px solid #c4c4c4;
  height: 35px;
  display: flex;
  align-items: center;
  padding: 0 10px 0 8px;
  gap: 10px;
}
.info {
  width: 12px;
  height: 12px;
  border-radius: 50%;
  background: #111;
  color: #fff;
  font: 700 9px/12px "Liberation Serif", serif;
  text-align: center;
  margin-right: auto;
}
.btn {
  width: 60px;
  height: 21px;
  box-sizing: border-box;
  padding: 0;
  background: #e9e9e9;
  border: 1px solid #c4c4c4;
  font: 11px Roboto, sans-serif;
  color: #666;
}

.nav-bar {
  position: absolute;
  left: 857px;
  top: 875px;
  width: 206px;
  height: 23px;
  box-sizing: border-box;
  background: #f0f0f0;
  display: flex;
  align-items: center;
  padding-left: 5px;
  gap: 6px;
}
.nav-bar__solo {
  margin-right: 6px;
}

.status {
  position: absolute;
  right: 21px;
  top: 880px;
  font-size: 11px;
  font-weight: 500;
  letter-spacing: 0.34px;
  color: #333;
}

.taskbar {
  height: 2px;
  flex: none;
  background: #10202c;
  padding-left: 245px;
}
.taskbar__app {
  display: block;
  width: 50px;
  height: 2px;
  background: #33414b;
}
</style>

<style>
html,
body {
  overflow: hidden;
}
</style>
